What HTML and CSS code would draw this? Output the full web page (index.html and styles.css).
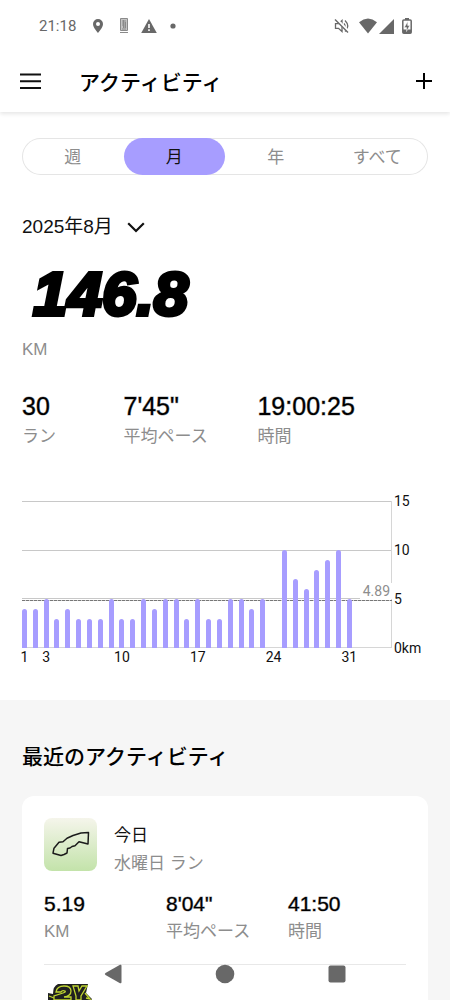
FILE: index.html
```html
<!DOCTYPE html>
<html lang="ja">
<head>
<meta charset="utf-8">
<meta name="viewport" content="width=device-width, initial-scale=1">
<title>アクティビティ</title>
<link rel="stylesheet" href="styles.css">
</head>
<body>
<div class="statusbar">
  <span class="clock">21:18</span>
  <svg class="s-pin" width="12" height="16" viewBox="0 0 12 16"><path fill="#686868" fill-rule="evenodd" d="M6 1a5 5 0 0 0-5 5c0 3.600 5 9 5 9s5-5.400 5-9a5 5 0 0 0-5-5zm0 3a2 2 0 1 1 0 4 2 2 0 0 1 0-4z"/></svg>
  <svg class="s-app" width="8" height="16" viewBox="0 0 8 16"><path fill="#c4c4c4" stroke="#8a8a8a" d="M.5.500h7v12h-7z"/><path fill="none" stroke="#8a8a8a" d="M2 3h4M2 5h3M2 7h4M3 9h3M2 11h4M3.500 2v8M5.500 4v6M0 14.500h8"/></svg>
  <svg class="s-warn" width="16" height="14" viewBox="0 0 16 14"><path fill="#686868" d="M8 0l7.800 14H.2z"/><path stroke="#fff" stroke-width="1.600" d="M8 5v4M8 10.300v1.600"/></svg>
  <svg class="s-dot" width="6" height="6" viewBox="0 0 6 6"><circle cx="3" cy="3" r="2.600" fill="#686868"/></svg>
  <svg class="s-mute" width="16" height="16" viewBox="0 0 16 16"><g fill="none" stroke="#686868" stroke-width="1.300"><path d="M1.500 5.700h3L8 2.500v11l-3.500-3.200h-3zM10 5.500q2 2.500 0 5M11 2.500q5.500 5.500 0 11"/></g><path stroke="#fff" stroke-width="3" d="M2 1l13 13"/><path stroke="#686868" stroke-width="1.400" d="M1 1.500l13 13"/></svg>
  <svg class="s-wifi" width="18" height="16" viewBox="0 0 18 16"><path fill="#686868" d="M9 15.500L0 4.200Q9-3 18 4.200z"/></svg>
  <svg class="s-cell" width="15" height="15" viewBox="0 0 15 15"><path fill="#686868" d="M15 0v15H0z"/></svg>
  <svg class="s-batt" width="10" height="16" viewBox="0 0 10 16"><rect x=".8" y="2" width="8.400" height="13.200" rx="1" fill="none" stroke="#686868" stroke-width="1.500"/><path fill="#686868" d="M3 0h4v2H3zM1 11.500h8V15H1z"/><path fill="#686868" stroke="#fff" stroke-width=".5" d="M5.700 3.500L2.300 9.500h2.200v4l3.200-6H5.700z"/></svg>
</div>
<header class="appbar">
  <button class="icon-btn" aria-label="メニュー"><svg width="21" height="16" viewBox="0 0 21 16"><path stroke="#111" stroke-width="2" d="M0 1.500h21M0 8.200h21M0 15h21"/></svg></button>
  <h1 class="title">アクティビティ</h1>
  <button class="icon-btn" aria-label="追加"><svg width="16" height="16" viewBox="0 0 16 16"><path stroke="#000" stroke-width="2" d="M0 8h16M8 0v16"/></svg></button>
</header>
<main class="content">
  <section class="summary">
    <div class="tabs" role="tablist">
      <button class="tab" role="tab">週</button>
      <button class="tab tab-on" role="tab" aria-selected="true">月</button>
      <button class="tab" role="tab">年</button>
      <button class="tab" role="tab">すべて</button>
    </div>
    <button class="month">2025年8月<svg class="chevron" width="18" height="11" viewBox="0 0 18 11"><path fill="none" stroke="#111" stroke-width="2.200" d="M1.200 1.200L9 9l7.800-7.800"/></svg></button>
    <p class="distance">146.8</p>
    <p class="label unit">KM</p>
    <dl class="stats">
      <div class="stat"><dd class="value">30</dd><dt class="label">ラン</dt></div>
      <div class="stat"><dd class="value">7'45"</dd><dt class="label">平均ペース</dt></div>
      <div class="stat"><dd class="value">19:00:25</dd><dt class="label">時間</dt></div>
    </dl>
    <div class="chart">
      <div class="grid"><i class="line"></i><i class="line"></i><i class="line"></i></div>
      <div class="average"><span class="average-label">4.89</span></div>
      <div class="days" id="days"></div>
      <div class="scale"><span>15</span><span>10</span><span>5</span><span>0km</span></div>
    </div>
  </section>
  <section class="recent">
    <h2 class="heading">最近のアクティビティ</h2>
    <div class="card">
      <article class="run">
        <div class="run-head">
          <svg class="thumb" viewBox="0 0 53 53"><defs><linearGradient id="g" x2="0" y2="1"><stop stop-color="#f5f5eb"/><stop offset="1" stop-color="#c3e3aa"/></linearGradient></defs><rect width="53" height="53" rx="8" fill="url(#g)"/><path fill="none" stroke="#1b1b1b" stroke-width="1.500" stroke-linejoin="round" d="M44.500 14.500l-.5 11.500-9-2.300-4 4-3 .8-2 1.500-2.500.5-.5 4.500-3 1.500-3 1-8-2.300 1-5 5-6 4-.5 4-3.500 6-2.700 8-2.500z"/></svg>
          <div class="run-text"><h3 class="run-title">今日</h3><p class="label run-sub">水曜日 ラン</p></div>
        </div>
        <dl class="stats run-stats">
          <div class="stat"><dd class="value">5.19</dd><dt class="label">KM</dt></div>
          <div class="stat"><dd class="value">8'04"</dd><dt class="label">平均ペース</dt></div>
          <div class="stat"><dd class="value">41:50</dd><dt class="label">時間</dt></div>
        </dl>
      </article>
      <article class="run">
        <svg class="thumb" viewBox="0 0 53 53"><path fill="#202020" d="M14 0h30l-2 9 6 6-4 6H4V9l5 1q0-8 5-10z"/><g fill="none" stroke="#bfd430" stroke-width="1.300"><path d="M12 8q1-6 8-6 7 0 7 5 0 5-7 6h7v3H10v-4l9-3q3-1 2-2-3-1-4 1zM29 2h5l1 5 3-5h5l-6 10v4h-5v-4z"/><path d="M5 12l5 2M41 9l5 6-4-1"/></g></svg>
      </article>
    </div>
  </section>
</main>
<nav class="sysnav">
  <button class="sys-btn" aria-label="戻る"><svg width="18" height="20" viewBox="0 0 18 20"><path fill="#686868" d="M16 .8q1.500-.6 1.500 1.200v16q0 1.800-1.500 1.200L1.500 11q-1.500-1 0-2z"/></svg></button>
  <button class="sys-btn" aria-label="ホーム"><svg width="20" height="20" viewBox="0 0 20 20"><circle cx="10" cy="10" r="9.300" fill="#686868"/></svg></button>
  <button class="sys-btn" aria-label="履歴"><svg width="18" height="18" viewBox="0 0 18 18"><rect x=".5" y=".5" width="17" height="17" rx="2" fill="#686868"/></svg></button>
</nav>
<script src="chart.js"></script>
</body>
</html>
```
FILE: styles.css
```css
* { box-sizing: border-box; margin: 0; padding: 0; }
body {
  height: 100vh;
  display: flex;
  flex-direction: column;
  overflow: hidden;
  background: #fff;
  color: #111;
  font-family: "Liberation Sans", "Noto Sans CJK JP", sans-serif;
  font-size: 17px;
}
button { border: 0; background: none; color: inherit; font: inherit; cursor: pointer; }
svg { display: block; flex: none; }

.statusbar {
  flex: none;
  display: flex;
  align-items: center;
  height: 52px;
  padding: 0 38px 0 39px;
  color: #686868;
}
.clock { font: 15px/20px Roboto, sans-serif; }
.s-pin { margin-left: 16px; }
.s-app { margin-left: 16px; }
.s-warn { margin-left: 13px; }
.s-dot { margin-left: 13px; }
.s-mute { margin-left: auto; }
.s-wifi { margin-left: 9px; }
.s-cell { margin-left: 2px; }
.s-batt { margin-left: 8px; }

.appbar {
  flex: none;
  display: flex;
  align-items: center;
  height: 60px;
  padding: 0 18px 2px 20px;
  z-index: 1;
  background: #fff;
  box-shadow: 0 2px 4px rgba(0, 0, 0, .1);
  clip-path: inset(0 0 -8px);
}
.icon-btn { display: flex; align-items: center; height: 40px; }
.title { flex: 1; margin-left: 38px; padding-top: 3px; font-size: 21px; line-height: 30px; font-weight: 500; color: #000; }

.content { flex: 1; min-height: 0; overflow: hidden; }
.summary { padding: 26px 22px 35px; }

.tabs {
  display: grid;
  grid-template-columns: repeat(4, 1fr);
  height: 37px;
  border-radius: 19px;
  box-shadow: inset 0 0 0 1px #e5e5e5;
}
.tab { padding-bottom: 2px; color: #8d8d8d; font-size: 17px; border-radius: 19px; }
.tab-on { background: #a79dff; color: #111; }

.month { display: flex; align-items: center; gap: 14px; height: 28px; margin-top: 37px; padding-bottom: 4px; font-size: 19px; }
.chevron { margin-top: 6px; }
.distance {
  margin: 24px 0 0 11px;
  font: italic 700 62px/60px "Liberation Sans", sans-serif;
  color: #000;
  -webkit-text-stroke: 4px #000;
}
.label { color: #8d8d8d; font-size: 17px; line-height: 24px; font-weight: 400; }
.unit { margin-top: 14px; }

.stats { display: grid; grid-template-columns: 25% 33% 1fr; margin-top: 29px; }
.stat { display: flex; flex-direction: column; gap: 4px; }
.value { font-size: 25px; line-height: 30px; color: #000; -webkit-text-stroke: 1px rgba(0, 0, 0, .4); }

.chart {
  display: grid;
  grid-template-columns: 1fr 36px;
  grid-template-rows: 147px 17px;
  margin-top: 52px;
  font: 14px/16px Roboto, sans-serif;
}
.grid {
  grid-area: 1 / 1;
  display: grid;
  grid-template-rows: repeat(3, 1fr);
  border-right: 1px solid #d6d6d6;
  border-bottom: 1px solid #d6d6d6;
}
.line { border-top: 1px solid #c8c8c8; }
.average {
  grid-area: 1 / 1;
  align-self: end;
  display: flex;
  align-items: flex-start;
  justify-content: flex-end;
  height: 65px;
  background: repeating-linear-gradient(90deg, #777 0 3px, #ccc 3px 4px) 0 17px / 100% 1px no-repeat;
}
.average-label { padding: 0 2px 0 3px; background: #fff; color: #8d8d8d; line-height: 16px; }
.days {
  grid-area: 1 / 1 / 3 / 2;
  display: flex;
  justify-content: space-between;
  padding-right: 40px;
}
.day { display: grid; grid-template: 147px 17px / 100%; align-items: end; width: 5px; }
.day-label { justify-self: center; }
.bar { background: #a79dff; border-radius: 3px 3px 0 0; }
.scale {
  grid-area: 1 / 2;
  display: flex;
  flex-direction: column;
  justify-content: space-between;
  margin: -8px 0;
  padding-left: 2px;
}

.recent { min-height: 400px; padding: 42px 22px 0; background: #f6f6f6; }
.heading { font-size: 21px; line-height: 30px; font-weight: 500; color: #000; }
.card { margin-top: 24px; padding: 0 22px; border-radius: 12px; background: #fff; }
.run { padding: 22px 0 20px; }
.run + .run { padding-top: 19px; border-top: 1px solid #e8e8e8; }
.run-head { display: flex; gap: 17px; }
.thumb { width: 53px; height: 53px; }
.run-text { margin-top: 4px; }
.run-title { font-size: 17px; line-height: 28px; font-weight: 400; }
.run-sub { line-height: 28px; }
.run-stats { grid-template-columns: 122px 122px 1fr; margin-top: 13px; }
.run-stats .stat { gap: 3px; }
.run-stats .value { font-size: 21px; line-height: 26px; }

.sysnav {
  position: fixed;
  right: 0;
  bottom: 0;
  left: 0;
  display: grid;
  grid-template-columns: repeat(3, 112px);
  justify-content: center;
  height: 52px;
}
.sys-btn { display: flex; align-items: center; justify-content: center; }
```
FILE: chart.js
```js
const km = [4, 4, 5, 3, 4, 3, 3, 3, 5, 3, 3, 5, 4, 5, 5, 3, 5, 3, 3, 5, 5, 4, 5, 0, 10, 7, 6, 8, 9, 10, 5];
const labelled = [1, 3, 10, 17, 24, 31];
document.getElementById('days').innerHTML = km.map((value, i) => {
  const day = i + 1;
  const label = labelled.includes(day) ? `<span class="day-label">${day}</span>` : '';
  return `<div class="day"><div class="bar" style="height:${value / 15 * 100}%"></div>${label}</div>`;
}).join('');
```
